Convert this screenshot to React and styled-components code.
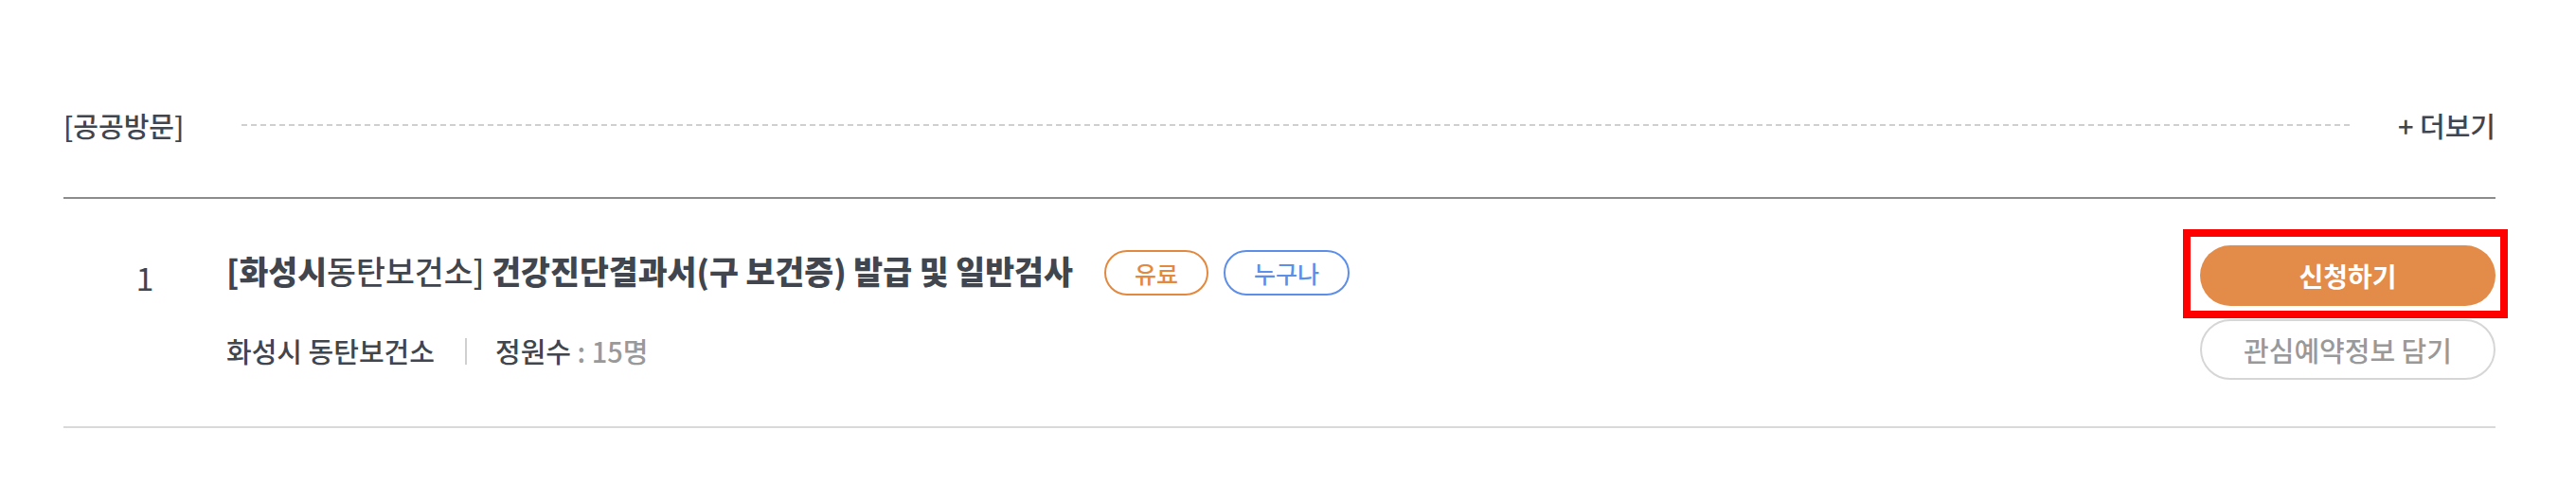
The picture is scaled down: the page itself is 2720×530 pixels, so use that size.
import React from 'react';
import styled, { createGlobalStyle } from 'styled-components';

const GlobalStyle = createGlobalStyle`
  body {
    margin: 0;
    background: #fff;
    font-family: "Noto Sans CJK KR", "Noto Sans", sans-serif;
    color: #40454e;
  }
  * { box-sizing: border-box; }
`;

const items = [
  {
    no: 1,
    place: '화성시 동탄보건소',
    capacity: '15명',
    badges: [
      { label: '유료', tone: 'orange' },
      { label: '누구나', tone: 'blue' },
    ],
  },
];

function App() {
  return (
    <>
      <GlobalStyle />
      <Page>
        <Header>
          <SectionTitle>[공공방문]</SectionTitle>
          <Dots />
          <More href="#">+ 더보기</More>
        </Header>
        <List>
          {items.map((item) => (
            <Row key={item.no}>
              <Num>{item.no}</Num>
              <Info>
                <TitleLine>
                  <Title>
                    <b>[화성시</b>동탄보건소]<b> 건강진단결과서(구 보건증) 발급 및 일반검사</b>
                  </Title>
                  <Badges>
                    {item.badges.map((b) => (
                      <Badge key={b.label} tone={b.tone}>{b.label}</Badge>
                    ))}
                  </Badges>
                </TitleLine>
                <Sub>
                  <span>{item.place}</span>
                  <Divider />
                  <span>
                    정원수<Gray> : {item.capacity}</Gray>
                  </span>
                </Sub>
              </Info>
              <Actions>
                <ApplyButton>
                  신청하기
                  <Highlight />
                </ApplyButton>
                <WishButton>관심예약정보 담기</WishButton>
              </Actions>
            </Row>
          ))}
        </List>
      </Page>
    </>
  );
}

export default App;

const Page = styled.div`
  width: 2568px;
  margin-left: 67px;
  padding-top: 100px;
`;

const Header = styled.div`
  display: flex;
  align-items: center;
  height: 64px;
  margin-bottom: 44px;
`;

const SectionTitle = styled.h2`
  margin: 0;
  font-size: 29px;
  font-weight: 500;
  line-height: 1;
  color: #40454e;
`;

const Dots = styled.div`
  flex: 1;
  height: 2px;
  margin: 0 49px 0 61px;
  background-image: linear-gradient(to right, #cfcfcf 60%, transparent 0);
  background-size: 10px 2px;
  background-repeat: repeat-x;
`;

const More = styled.a`
  font-size: 29px;
  font-weight: 500;
  line-height: 1;
  color: #40454e;
  text-decoration: none;
`;

const List = styled.div`
  border-top: 2px solid #8c8c8c;
`;

const Row = styled.div`
  display: flex;
  align-items: flex-start;
  padding: 49px 0;
  border-bottom: 2px solid #d9d9d9;
`;

const Num = styled.div`
  width: 172px;
  padding-top: 17px;
  text-align: center;
  font-size: 34px;
  font-weight: 400;
  line-height: 1;
  color: #40454e;
`;

const Info = styled.div`
  flex: 1;
  display: flex;
  flex-direction: column;
`;

const TitleLine = styled.div`
  display: flex;
  align-items: center;
  height: 48px;
  margin-top: 5px;
`;

const Title = styled.h3`
  margin: 0 0 4px;
  font-size: 33.6px;
  font-weight: 500;
  line-height: 1;
  color: #40454e;
  b { font-weight: 900; }
`;

const Badges = styled.div`
  display: flex;
  gap: 16px;
  margin-left: 33px;
`;

const tones = {
  orange: '#e3893f',
  blue: '#5d8fe8',
};

const Badge = styled.span`
  display: inline-flex;
  align-items: center;
  height: 48px;
  padding: 0 30px;
  border: 2px solid ${(p) => tones[p.tone]};
  border-radius: 24px;
  color: ${(p) => tones[p.tone]};
  font-size: 25px;
  font-weight: 500;
  line-height: 1;
`;

const Sub = styled.div`
  display: flex;
  align-items: center;
  margin-top: 44px;
  font-size: 29px;
  font-weight: 500;
  line-height: 1;
  color: #40454e;
`;

const Divider = styled.i`
  display: block;
  width: 2px;
  height: 28px;
  margin: 0 30px 0 32px;
  background: #d0d0d0;
`;

const Gray = styled.span`
  color: #999;
`;

const Actions = styled.div`
  display: flex;
  flex-direction: column;
  gap: 14px;
  width: 312px;
`;

const ApplyButton = styled.button`
  position: relative;
  height: 64px;
  border: 0;
  border-radius: 32px;
  background: #e38b48;
  color: #fff;
  font-family: inherit;
  font-size: 28px;
  font-weight: 700;
  cursor: pointer;
`;

const Highlight = styled.span`
  position: absolute;
  left: -18px;
  right: -13px;
  top: -17px;
  bottom: -13px;
  border: 8px solid #ff0000;
  pointer-events: none;
`;

const WishButton = styled.button`
  height: 64px;
  border: 2px solid #d6d6d6;
  border-radius: 32px;
  background: #fff;
  color: #999;
  font-family: inherit;
  font-size: 29px;
  font-weight: 500;
  cursor: pointer;
`;
